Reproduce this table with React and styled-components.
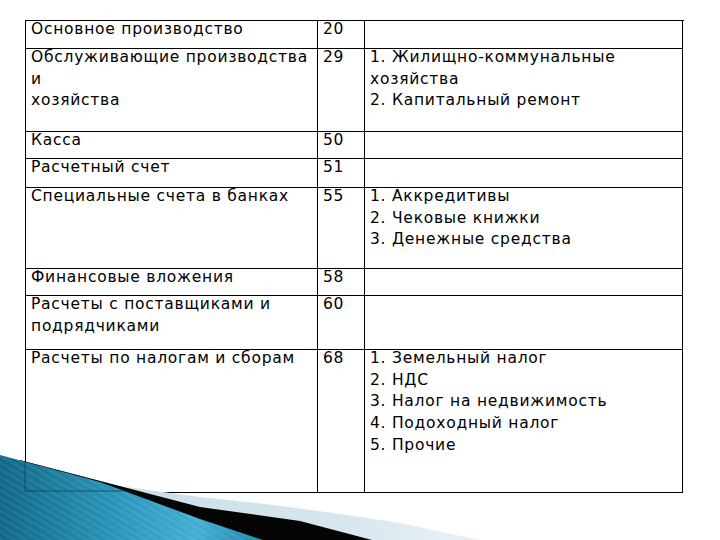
import React from "react";
import styled, { createGlobalStyle } from "styled-components";

const Global = createGlobalStyle`
  html, body { margin: 0; padding: 0; background: #fff; }
  body { width: 720px; height: 540px; overflow: hidden; }
  * { box-sizing: border-box; }
`;

const Page = styled.div`
  position: relative;
  width: 720px;
  height: 540px;
  padding: 20px 0 0 25px;
  font-family: "DejaVu Sans", Verdana, sans-serif;
  color: #000;
`;

const Table = styled.div`
  position: relative;
  z-index: 1;
  display: grid;
  width: 659px;
  grid-template-columns: 292px 47px 318px;
  grid-template-rows: 28px 83px 27px 29px 81px 27px 54px 143px;
  border-top: 1px solid #000;
  border-left: 1px solid #000;
`;

const Cell = styled.div`
  border-right: 1px solid #000;
  border-bottom: 1px solid #000;
  padding: 0 3px 0 5px;
  font-size: 15.5px;
  letter-spacing: 0.75px;
  line-height: 21.7px;
  white-space: pre-line;
  overflow: hidden;
`;

const CellText = styled.div`
  margin-top: -2px;
`;

const Decor = styled.svg`
  position: absolute;
  left: 0;
  bottom: 0;
  z-index: 2;
  pointer-events: none;
`;

const rows = [
  ["Основное производство", "20", ""],
  ["Обслуживающие производства\nи\nхозяйства", "29", "1. Жилищно-коммунальные\nхозяйства\n2. Капитальный ремонт"],
  ["Касса", "50", ""],
  ["Расчетный счет", "51", ""],
  ["Специальные счета в банках", "55", "1. Аккредитивы\n2. Чековые книжки\n3. Денежные средства"],
  ["Финансовые вложения", "58", ""],
  ["Расчеты с поставщиками и\nподрядчиками", "60", ""],
  ["Расчеты по налогам и сборам", "68", "1. Земельный налог\n2. НДС\n3. Налог на недвижимость\n4. Подоходный налог\n5. Прочие"],
];

export default function App() {
  return (
    <Page>
      <Global />
      <Table>
        {rows.map((r, i) => (
          <React.Fragment key={i}>
            <Cell><CellText>{r[0]}</CellText></Cell>
            <Cell><CellText>{r[1]}</CellText></Cell>
            <Cell><CellText>{r[2]}</CellText></Cell>
          </React.Fragment>
        ))}
      </Table>
      <Decor width="720" height="100" viewBox="0 440 720 100">
        <defs>
          <linearGradient id="pale" x1="0" y1="0" x2="1" y2="0">
            <stop offset="0" stopColor="#c4dae6" />
            <stop offset="0.7" stopColor="#d6e6ee" />
            <stop offset="1" stopColor="#eaf2f6" />
          </linearGradient>
          <linearGradient id="blue" x1="0" y1="0" x2="1" y2="0">
            <stop offset="0" stopColor="#0f6886" />
            <stop offset="0.45" stopColor="#2a95bb" />
            <stop offset="0.75" stopColor="#43aed3" />
            <stop offset="1" stopColor="#1f86ad" />
          </linearGradient>
          <pattern id="stripes" width="6" height="6" patternUnits="userSpaceOnUse" patternTransform="rotate(-60)">
            <rect width="3" height="6" fill="#ffffff" opacity="0.06" />
          </pattern>
        </defs>
        <path d="M0 470 L200 497 Q300 507 400 523 L480 540 L0 540 Z" fill="url(#pale)" />
        <path d="M20 460 L200 507 L300 521 L372 540 L0 540 Z" fill="#050505" />
        <path d="M0 455 L100 482 L200 519 L263 540 L0 540 Z" fill="url(#blue)" />
        <path d="M0 455 L100 482 L200 519 L263 540 L0 540 Z" fill="url(#stripes)" />
        <path d="M25 462 L25 491 L132 491" fill="none" stroke="#0b3a52" strokeWidth="1" opacity="0.7" />
      </Decor>
    </Page>
  );
}
